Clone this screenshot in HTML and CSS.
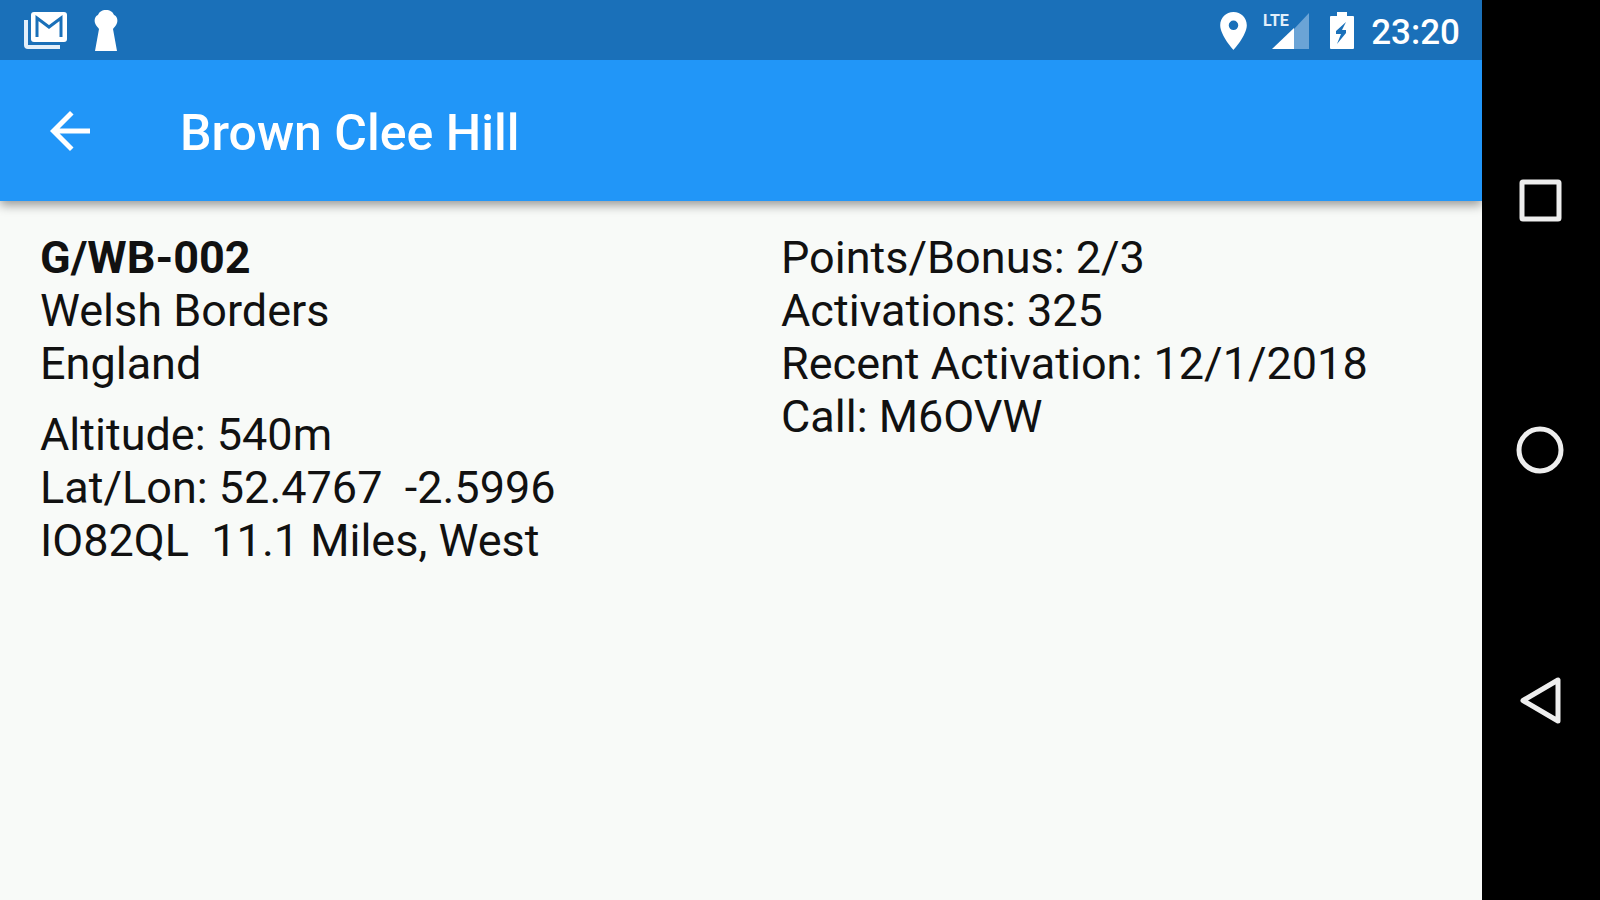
FILE: index.html
```html
<!doctype html>
<html lang="en">
<head>
    <meta charset="utf-8">
    <meta name="viewport" content="width=device-width, initial-scale=1.0">
    <title>Brown Clee Hill</title>
    <link rel="stylesheet" href="styles.css">
</head>
<body>
    <div class="screen">
        <div class="status-bar">
            <svg class="icon-mail" viewBox="0 0 44 38" aria-hidden="true">
                <path d="M2 8v25q0 2 2 2h32" fill="none" stroke="#e3effa" stroke-width="4"/>
                <rect x="7" y="0" width="36" height="30" rx="3" fill="#fff"/>
                <path d="M13 25V6l12 9 12-9v19" fill="none" stroke="#1a70b9" stroke-width="3"/>
            </svg>
            <svg class="icon-keyhole" viewBox="0 0 24 42" aria-hidden="true">
                <path d="M12 0c4 0 7 2 8 5 3 1 4 5 3 8-1 3-3 4-4 6l4 22H1l4-22c-1-2-3-3-4-6-1-3 0-7 3-8 1-3 4-5 8-5z" fill="#fff"/>
            </svg>
            <div class="status-right">
                <svg class="icon-pin" viewBox="5 2 14 20" aria-hidden="true">
                    <path d="M12 2C8.100 2 5 5.100 5 9c0 5.300 7 13 7 13s7-7.700 7-13c0-3.900-3.100-7-7-7zm0 9.500a2.500 2.500 0 1 1 0-5 2.500 2.500 0 0 1 0 5z" fill="#fff"/>
                </svg>
                <svg class="icon-signal" viewBox="0 0 48 38" aria-hidden="true">
                    <path d="M46 1v36H31V17z" fill="#6ba4d6"/>
                    <path d="M31 16v21H9z" fill="#fff"/>
                    <text class="lte" x="0" y="14">LTE</text>
                </svg>
                <svg class="icon-battery" viewBox="0 0 26 38" aria-hidden="true">
                    <path d="M8 0h10v4h6q1 0 1 1v31q0 1-1 1H2q-1 0-1-1V5q0-1 1-1h6z" fill="#fff"/>
                    <path d="M17 10l-10 9v3h5l-4 10 9-11v-3h-4z" fill="#1a70b9"/>
                </svg>
                <span class="clock">23:20</span>
            </div>
        </div>
        <header class="app-bar">
            <button class="back" type="button" aria-label="Back">
                <svg viewBox="0 0 24 24" aria-hidden="true">
                    <path d="M20 11H7.830l5.590-5.590L12 4l-8 8 8 8 1.410-1.410L7.830 13H20v-2z" fill="#fff"/>
                </svg>
            </button>
            <h1>Brown Clee Hill</h1>
        </header>
        <main class="details">
            <div class="column">
                <div class="group">
                    <p class="ref">G/WB-002</p>
                    <p>Welsh Borders</p>
                    <p>England</p>
                </div>
                <div class="group">
                    <p>Altitude: 540m</p>
                    <p>Lat/Lon: 52.4767&nbsp; -2.5996</p>
                    <p>IO82QL&nbsp; 11.1 Miles, West</p>
                </div>
            </div>
            <div class="column">
                <div class="group">
                    <p>Points/Bonus: 2/3</p>
                    <p>Activations: 325</p>
                    <p>Recent Activation: 12/1/2018</p>
                    <p>Call: M6OVW</p>
                </div>
            </div>
        </main>
    </div>
    <nav class="nav-bar">
        <button type="button" aria-label="Overview">
            <svg viewBox="0 0 48 48" aria-hidden="true">
                <rect x="5" y="6" width="37" height="37" rx="1"/>
            </svg>
        </button>
        <button type="button" aria-label="Home">
            <svg viewBox="0 0 48 48" aria-hidden="true">
                <circle cx="23" cy="24" r="21"/>
            </svg>
        </button>
        <button type="button" aria-label="Back">
            <svg viewBox="0 0 48 48" aria-hidden="true">
                <path d="M41 4v41L6 24.500z"/>
            </svg>
        </button>
    </nav>
</body>
</html>
```

FILE: styles.css
```css
* {
    box-sizing: border-box;
}
body {
    margin: 0;
    display: flex;
    min-height: 100vh;
    font-family: Roboto, "Liberation Sans", sans-serif;
    background: #f8faf8;
    color: #111;
}
h1, p {
    margin: 0;
}
button {
    padding: 0;
    border: 0;
    background: none;
    cursor: pointer;
}
svg {
    display: block;
    overflow: visible;
}
.screen {
    flex: 1;
    display: flex;
    flex-direction: column;
}
.status-bar {
    display: flex;
    align-items: center;
    height: 60px;
    padding: 2px 22px 0 24px;
    background: #1a70b9;
}
.icon-mail {
    width: 44px;
    height: 38px;
}
.icon-keyhole {
    width: 24px;
    height: 42px;
    margin-left: 26px;
}
.status-right {
    display: flex;
    align-items: center;
    margin-left: auto;
}
.icon-pin {
    width: 27px;
    height: 38px;
}
.icon-signal {
    width: 48px;
    height: 38px;
    margin: 0 18px 0 16px;
}
.lte {
    font-size: 16px;
    font-weight: 700;
    fill: #e3effa;
}
.icon-battery {
    width: 26px;
    height: 38px;
}
.clock {
    margin-left: 16px;
    padding-top: 2px;
    font-size: 35px;
    font-weight: 500;
    color: #fff;
}
.app-bar {
    display: flex;
    align-items: center;
    height: 141px;
    padding: 0 40px;
    background: #2196f8;
    box-shadow: 0 4px 10px rgba(0, 0, 0, 0.4);
    clip-path: inset(0 0 -20px 0);
}
.back svg {
    width: 60px;
    height: 60px;
}
.app-bar h1 {
    margin-left: 80px;
    padding-top: 4px;
    font-size: 50px;
    font-weight: 500;
    color: #fff;
}
.details {
    display: flex;
    padding-top: 30px;
}
.column {
    flex: 1;
    padding-left: 40px;
    font-size: 45px;
    line-height: 53px;
}
.group {
    margin-bottom: 18px;
}
.ref {
    font-weight: 700;
}
.nav-bar {
    display: flex;
    flex-direction: column;
    align-items: center;
    justify-content: center;
    gap: 202px;
    width: 118px;
    background: #000;
}
.nav-bar svg {
    width: 48px;
    height: 48px;
    fill: none;
    stroke: #eee;
    stroke-width: 5;
    stroke-linejoin: round;
}
```
